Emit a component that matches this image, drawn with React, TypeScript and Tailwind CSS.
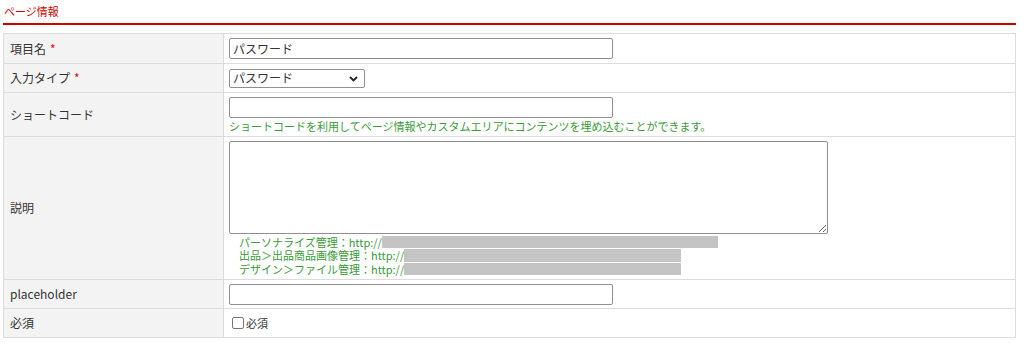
import React from 'react';

const labelCls = 'w-[220px] bg-[#f3f3f3] border border-[#dcdcdc] px-[6px] align-middle text-[#333] text-[12px]';
const valueCls = 'border border-[#dcdcdc] px-[5px] align-middle';
const inputCls = 'block h-[21px] w-[384px] border border-[#8f8f8f] rounded-[2px] bg-white px-[3px] text-[12px] text-[#333] outline-none';

const Req = () => <span className="ml-[4px] text-[#e60012]">*</span>;

const helpLines = [
  { text: 'パーソナライズ管理：http://', bar: 'w-[336px]' },
  { text: '出品＞出品商品画像管理：http://', bar: 'w-[277px]' },
  { text: 'デザイン＞ファイル管理：http://', bar: 'w-[277px]' },
];

export default function App() {
  return (
    <div className="bg-white w-[1024px] h-[343px] px-[3px] pt-[3px]" style={{ fontFamily: '"Noto Sans CJK JP", "Noto Sans", sans-serif' }}>
      <h2 className="text-[#cc0000] text-[11px] leading-[16px] pl-[1px]">ページ情報</h2>
      <div className="mt-[4px] h-[2px] w-[1013px] bg-[#d40000]" />
      <table className="mt-[8px] w-[1013px] border-collapse">
        <tbody>
          <tr className="h-[30px]">
            <td className={labelCls}>
              項目名<Req />
            </td>
            <td className={valueCls}>
              <input className={inputCls} defaultValue="パスワード" />
            </td>
          </tr>
          <tr className="h-[29px]">
            <td className={labelCls}>
              入力タイプ<Req />
            </td>
            <td className={valueCls}>
              <div className="relative w-[136px] h-[19px] border border-[#8f8f8f] rounded-[2px] bg-white flex items-center px-[3px] text-[12px] text-[#333]">
                <span>パスワード</span>
                <svg className="absolute right-[6px] top-[6px]" width="9" height="6" viewBox="0 0 9 6">
                  <path d="M1 1 L4.5 4.5 L8 1" fill="none" stroke="#222" strokeWidth="1.8" />
                </svg>
              </div>
            </td>
          </tr>
          <tr className="h-[43px]">
            <td className={labelCls}>ショートコード</td>
            <td className={`${valueCls} pt-[4px] pb-[3px]`}>
              <input className={`${inputCls} h-[20px]`} />
              <p className="text-[11px] leading-[14px] text-[#3a9a3a] mt-[1px]">
                ショートコードを利用してページ情報やカスタムエリアにコンテンツを埋め込むことができます。
              </p>
            </td>
          </tr>
          <tr className="h-[143px]">
            <td className={labelCls}>説明</td>
            <td className={`${valueCls} pt-[4px] pb-[3px]`}>
              <textarea className="block w-[599px] h-[93px] border border-[#8f8f8f] rounded-[2px] resize-y outline-none" />
              <div className="pl-[10px] text-[11px] text-[#3a9a3a] mt-[1px]">
                {helpLines.map((l) => (
                  <div key={l.text} className="flex items-center h-[13.5px]">
                    <span className="block h-[13px] leading-[13px] whitespace-nowrap">{l.text}</span>
                    <span className={`inline-block ${l.bar} h-[12.5px] bg-[#c4c4c4]`} />
                  </div>
                ))}
              </div>
            </td>
          </tr>
          <tr className="h-[29px]">
            <td className={labelCls}>placeholder</td>
            <td className={valueCls}>
              <input className={`${inputCls} h-[20px]`} />
            </td>
          </tr>
          <tr className="h-[29px]">
            <td className={labelCls}>必須</td>
            <td className={valueCls}>
              <label className="flex items-center gap-[2px] text-[11px] text-[#333] pl-[3px]">
                <span className="inline-block w-[12px] h-[12px] border border-[#767676] rounded-[2px] bg-white" />
                必須
              </label>
            </td>
          </tr>
        </tbody>
      </table>
    </div>
  );
}
